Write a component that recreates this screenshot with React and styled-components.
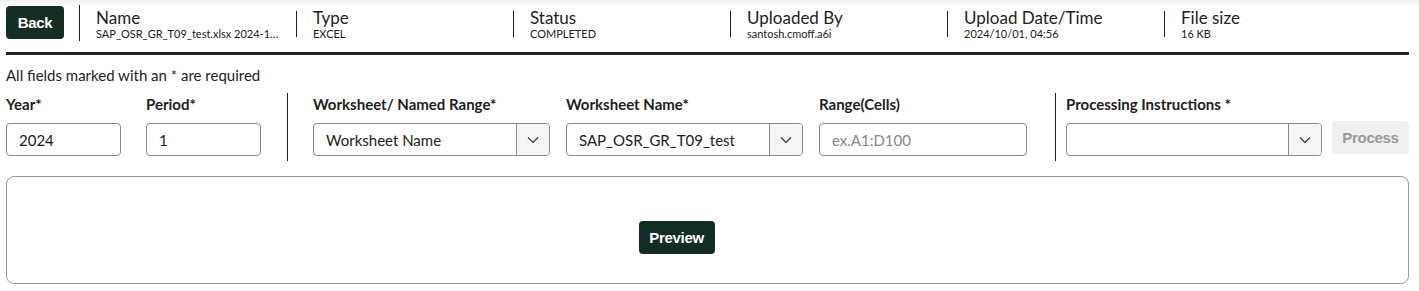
import { Fragment } from 'react';
import styled, { createGlobalStyle } from 'styled-components';

const GlobalStyle = createGlobalStyle`
	body {
		margin: 0;
		background: #fff;
		font-family: 'Lato', 'Noto Sans', sans-serif;
		color: #222;
	}
`;

const Page = styled.div`
	padding: 0 10px 0 6px;
	background: linear-gradient(to bottom, #f2f2f2 0, #fff 6px);
`;

const Header = styled.header`
	display: flex;
	align-items: center;
	height: 52px;
	border-bottom: 3px solid #222;
`;

const DarkButton = styled.button`
	height: 33px;
	padding: 0 10px;
	border: none;
	border-radius: 4px;
	background: #132d22;
	color: #fff;
	font-family: 'Liberation Sans', Arial, sans-serif;
	font-weight: 700;
	font-size: 15px;
	letter-spacing: -0.3px;
	cursor: pointer;
`;

const BackButton = styled(DarkButton)`
	width: 58px;
	margin-top: -7px;
	margin-right: 15px;
`;

const Separator = styled.div`
	flex-shrink: 0;
	width: 1px;
	height: ${(p) => p.$h}px;
	margin-top: ${(p) => p.$top}px;
	background: #222;
`;

const Cell = styled.div`
	width: ${(p) => p.$w}px;
	box-sizing: border-box;
	padding-left: 16px;
	padding-right: 12px;
	margin-top: -2px;
	display: flex;
	flex-direction: column;
`;

const CellLabel = styled.div`
	font-size: 17px;
	line-height: 18px;
	color: #222;
`;

const CellValue = styled.div`
	font-size: 11px;
	line-height: 13px;
	padding-bottom: 1px;
	color: #222;
	white-space: nowrap;
	overflow: hidden;
	text-overflow: ellipsis;
`;

const Note = styled.p`
	margin: 11px 0 0;
	font-size: 15px;
	line-height: 18px;
`;

const FormRow = styled.div`
	display: flex;
	align-items: flex-start;
	margin-top: 9px;
`;

const Group = styled.div`
	display: flex;
	gap: ${(p) => p.$gap}px;
	padding-top: 2px;
`;

const Divider = styled.div`
	width: 1px;
	height: 68px;
	background: #222;
	margin: 0 ${(p) => p.$right}px 0 ${(p) => p.$left}px;
`;

const Field = styled.div`
	width: ${(p) => p.$w}px;
	display: flex;
	flex-direction: column;
`;

const Label = styled.label`
	font-size: 15px;
	font-weight: 700;
	line-height: 18px;
	margin-bottom: 10px;
	color: #222;
`;

const TextInput = styled.input`
	box-sizing: border-box;
	width: 100%;
	height: 33px;
	border: 1px solid #8a8a8a;
	border-radius: 4px;
	padding: 0 12px;
	font-family: inherit;
	font-size: 15px;
	color: #222;
	&::placeholder { color: #888; }
`;

const SelectBox = styled.div`
	box-sizing: border-box;
	width: 100%;
	height: 33px;
	border: 1px solid #8a8a8a;
	border-radius: 4px;
	display: flex;
	overflow: hidden;
`;

const SelectValue = styled.div`
	flex: 1;
	display: flex;
	align-items: center;
	padding: 0 12px;
	font-size: 15px;
	color: #222;
`;

const SelectArrow = styled.div`
	width: 32px;
	border-left: 1px solid #8a8a8a;
	background: #f5f5f5;
	display: flex;
	align-items: center;
	justify-content: center;
`;

const ProcessButton = styled.button`
	width: 77px;
	height: 33px;
	margin: 28px 0 0 10px;
	border: none;
	border-radius: 4px;
	background: #efefef;
	color: #999;
	font-family: 'Liberation Sans', Arial, sans-serif;
	font-weight: 700;
	font-size: 15px;
	letter-spacing: -0.3px;
`;

const PreviewBox = styled.div`
	margin-top: 15px;
	height: 106px;
	box-sizing: content-box;
	border: 1px solid #999;
	border-radius: 8px;
	display: flex;
	align-items: flex-start;
	justify-content: center;
	padding: 0 62px 0 0;
`;

const PreviewButton = styled(DarkButton)`
	width: 76px;
	margin-top: 44px;
`;

const Chevron = () => (
	<svg width="12" height="8" viewBox="0 0 12 8" fill="none">
		<path d="M1 1.5l5 5 5-5" stroke="#333" strokeWidth="1.1" />
	</svg>
);

const Select = ({ value }) => (
	<SelectBox>
		<SelectValue>{value}</SelectValue>
		<SelectArrow><Chevron /></SelectArrow>
	</SelectBox>
);

const meta = [
	['Name', 'SAP_OSR_GR_T09_test.xlsx 2024-10-01'],
	['Type', 'EXCEL'],
	['Status', 'COMPLETED'],
	['Uploaded By', 'santosh.cmoff.a6i'],
	['Upload Date/Time', '2024/10/01, 04:56'],
	['File size', '16 KB'],
];

const App = () => (
	<Page>
		<GlobalStyle />
		<Header>
			<BackButton>Back</BackButton>
			<Separator $h={36} $top={-6} />
			{meta.map(([label, value], i) => (
				<Fragment key={label}>
					{i > 0 && <Separator $h={26} $top={-4} />}
					<Cell $w={216}>
						<CellLabel>{label}</CellLabel>
						<CellValue>{value}</CellValue>
					</Cell>
				</Fragment>
			))}
		</Header>

		<Note>All fields marked with an * are required</Note>

		<FormRow>
			<Group $gap={25}>
				<Field $w={115}>
					<Label>Year*</Label>
					<TextInput defaultValue="2024" />
				</Field>
				<Field $w={115}>
					<Label>Period*</Label>
					<TextInput defaultValue="1" />
				</Field>
			</Group>
			<Divider $left={26} $right={25} />
			<Group $gap={16}>
				<Field $w={237}>
					<Label>Worksheet/ Named Range*</Label>
					<Select value="Worksheet Name" />
				</Field>
				<Field $w={237}>
					<Label>Worksheet Name*</Label>
					<Select value="SAP_OSR_GR_T09_test" />
				</Field>
				<Field $w={208}>
					<Label>Range(Cells)</Label>
					<TextInput placeholder="ex.A1:D100" />
				</Field>
			</Group>
			<Divider $left={28} $right={10} />
			<Group $gap={0}>
				<Field $w={256}>
					<Label>Processing Instructions *</Label>
					<Select value="" />
				</Field>
			</Group>
			<ProcessButton disabled>Process</ProcessButton>
		</FormRow>

		<PreviewBox>
			<PreviewButton>Preview</PreviewButton>
		</PreviewBox>
	</Page>
);

export default App;
